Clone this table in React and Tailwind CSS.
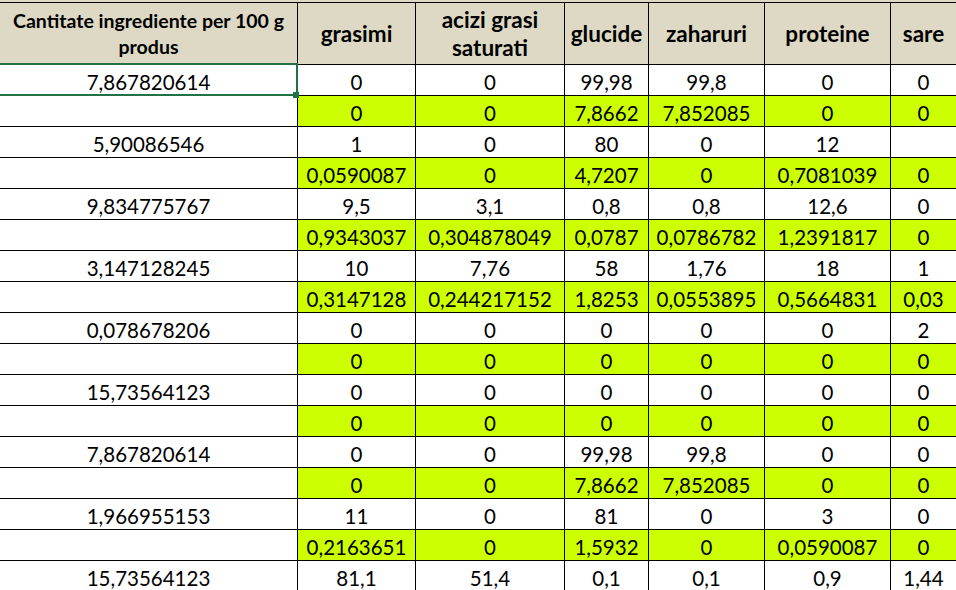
import React from "react";

const cols = "grid grid-cols-[298px_118px_149px_84px_116px_126px_1fr]";

const rows = [
  { g: false, v: ["7,867820614", "0", "0", "99,98", "99,8", "0", "0"] },
  { g: true, v: ["", "0", "0", "7,8662", "7,852085", "0", "0"] },
  { g: false, v: ["5,90086546", "1", "0", "80", "0", "12", ""] },
  { g: true, v: ["", "0,0590087", "0", "4,7207", "0", "0,7081039", "0"] },
  { g: false, v: ["9,834775767", "9,5", "3,1", "0,8", "0,8", "12,6", "0"] },
  { g: true, v: ["", "0,9343037", "0,304878049", "0,0787", "0,0786782", "1,2391817", "0"] },
  { g: false, v: ["3,147128245", "10", "7,76", "58", "1,76", "18", "1"] },
  { g: true, v: ["", "0,3147128", "0,244217152", "1,8253", "0,0553895", "0,5664831", "0,03"] },
  { g: false, v: ["0,078678206", "0", "0", "0", "0", "0", "2"] },
  { g: true, v: ["", "0", "0", "0", "0", "0", "0"] },
  { g: false, v: ["15,73564123", "0", "0", "0", "0", "0", "0"] },
  { g: true, v: ["", "0", "0", "0", "0", "0", "0"] },
  { g: false, v: ["7,867820614", "0", "0", "99,98", "99,8", "0", "0"] },
  { g: true, v: ["", "0", "0", "7,8662", "7,852085", "0", "0"] },
  { g: false, v: ["1,966955153", "11", "0", "81", "0", "3", "0"] },
  { g: true, v: ["", "0,2163651", "0", "1,5932", "0", "0,0590087", "0"] },
  { g: false, v: ["15,73564123", "81,1", "51,4", "0,1", "0,1", "0,9", "1,44"] },
];

const headers = ["grasimi", "acizi grasi saturati", "glucide", "zaharuri", "proteine", "sare"];

export default function App() {
  return (
    <div className="w-[956px] h-[590px] overflow-hidden bg-white text-black font-['Lato',sans-serif]">
      {/* header */}
      <div className={`${cols} bg-[#ddd9c4] pt-[2px]`}>
        <div className="h-[63px] border-y border-r border-black flex items-center justify-center text-center text-[19.5px] font-bold leading-[26px] px-1 whitespace-nowrap">
          <span>
            Cantitate ingrediente per 100 g
            <br />
            produs
          </span>
        </div>
        {headers.map((h, i) => (
          <div
            key={h}
            className={`h-[63px] border-y border-black flex items-center justify-center text-center text-[22.5px] font-bold leading-[28px] whitespace-nowrap ${
              i < headers.length - 1 ? "border-r" : ""
            }`}
          >
            {h === "acizi grasi saturati" ? (
              <span>
                acizi grasi
                <br />
                saturati
              </span>
            ) : (
              h
            )}
          </div>
        ))}
      </div>

      {rows.map((r, ri) => (
        <div key={ri} className={cols}>
          {r.v.map((c, ci) => (
            <div
              key={ci}
              className={`relative h-[31px] border-b border-black flex items-center justify-center pt-[4px] text-[20.5px] leading-none whitespace-nowrap ${
                ci < 6 ? "border-r" : ""
              } ${r.g && ci > 0 ? "bg-[#ccff00]" : "bg-white"}`}
            >
              {c}
              {ri === 0 && ci === 0 && (
                <>
                  <div className="absolute z-10 -left-[2px] -top-[2px] -right-[1px] -bottom-[1px] border-2 border-[#217346]"></div>
                  <div className="absolute z-20 -right-[2px] -bottom-[3px] w-[6px] h-[6px] bg-[#217346]"></div>
                </>
              )}
            </div>
          ))}
        </div>
      ))}
    </div>
  );
}
